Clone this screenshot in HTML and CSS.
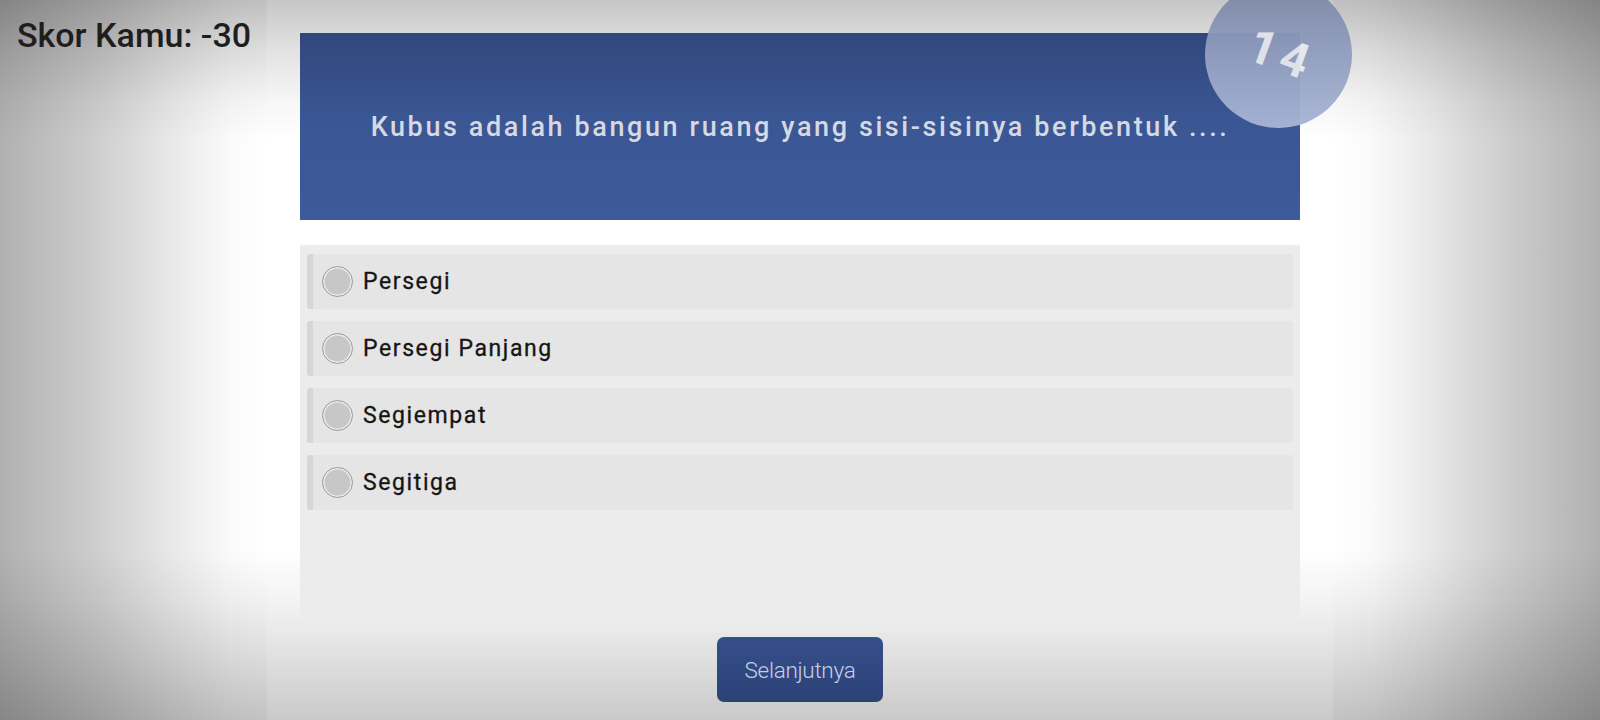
FILE: index.html
```html
<!DOCTYPE html>
<html lang="id">
<head>
<meta charset="utf-8">
<title>Kuis</title>
<link rel="stylesheet" href="styles.css">
</head>
<body>
<div class="page">
  <div class="score">Skor Kamu: -30</div>
  <main class="column">
    <section class="question">
      <p class="question-text">Kubus adalah bangun ruang yang sisi-sisinya berbentuk ....</p>
      <div class="badge"><span class="badge-num">14</span></div>
    </section>
    <section class="answers">
      <label class="option"><span class="radio"></span><span class="option-text">Persegi</span></label>
      <label class="option"><span class="radio"></span><span class="option-text">Persegi Panjang</span></label>
      <label class="option"><span class="radio"></span><span class="option-text">Segiempat</span></label>
      <label class="option"><span class="radio"></span><span class="option-text">Segitiga</span></label>
    </section>
    <div class="actions">
      <button class="next-btn" type="button">Selanjutnya</button>
    </div>
  </main>
</div>
</body>
</html>
```
FILE: styles.css
```css
* { box-sizing: border-box; }
html, body { margin: 0; padding: 0; }
body {
  width: 1600px;
  height: 720px;
  overflow: hidden;
  background: #ffffff;
  font-family: Roboto, "Liberation Sans", sans-serif;
}
.page {
  position: relative;
  width: 1600px;
  height: 720px;
  display: flex;
  justify-content: center;
  overflow: hidden;
  background:
    linear-gradient(to right,
      rgba(0,0,0,0.31) 0px,
      rgba(0,0,0,0.19) 100px,
      rgba(0,0,0,0.09) 170px,
      rgba(0,0,0,0.02) 230px,
      rgba(0,0,0,0) 270px,
      rgba(0,0,0,0) calc(100% - 270px),
      rgba(0,0,0,0.02) calc(100% - 230px),
      rgba(0,0,0,0.09) calc(100% - 170px),
      rgba(0,0,0,0.19) calc(100% - 100px),
      rgba(0,0,0,0.31) 100%),
    linear-gradient(to bottom,
      rgba(0,0,0,0.25) 0px,
      rgba(0,0,0,0.13) 50px,
      rgba(0,0,0,0.04) 100px,
      rgba(0,0,0,0) 140px,
      rgba(0,0,0,0) calc(100% - 170px),
      rgba(0,0,0,0.05) calc(100% - 120px),
      rgba(0,0,0,0.14) calc(100% - 60px),
      rgba(0,0,0,0.24) 100%),
    #ffffff;
}
.score {
  position: absolute;
  left: 17px;
  top: 15px;
  font-size: 34px;
  font-weight: 500;
  color: #1e1e1e;
  z-index: 2;
}
.column {
  width: 1066px;
  height: 720px;
  background: rgba(255, 255, 255, 0.12);
  padding: 33px 33px 0;
  display: flex;
  flex-direction: column;
  align-items: stretch;
}
.question {
  position: relative;
  height: 187px;
  background: linear-gradient(to bottom, #30477b 0%, #3a5693 45%, #3d5a99 100%);
  display: flex;
  align-items: center;
  justify-content: center;
}
.question-text {
  margin: 0;
  font-size: 27px;
  font-weight: 500;
  letter-spacing: 2.6px;
  color: #d6d9e4;
}
.badge {
  position: absolute;
  left: 905px;
  top: -52px;
  width: 147px;
  height: 147px;
  border-radius: 50%;
  background: linear-gradient(to bottom, #7a85a2 0%, #8f9cbd 45%, #a8b5d6 100%);
  opacity: 0.96;
  display: flex;
  align-items: center;
  justify-content: center;
}
.badge-num {
  display: inline-block;
  margin-top: 0px;
  margin-left: 6px;
  font-size: 48px;
  font-weight: 700;
  letter-spacing: 6px;
  color: #e8e9ef;
  transform: rotate(20deg);
}
.answers {
  margin-top: 25px;
  height: 373px;
  background: #ececec;
  border-radius: 2px;
  padding: 9px 7px;
  display: flex;
  flex-direction: column;
  gap: 12px;
}
.option {
  height: 55px;
  background: #e5e5e5;
  border-left: 6px solid #d6d6d6;
  border-radius: 3px;
  display: flex;
  align-items: center;
  padding-left: 9px;
  gap: 10px;
}
.radio {
  width: 31px;
  height: 31px;
  border-radius: 50%;
  background: #c7c7c7;
  border: 1px solid #9e9e9e;
  box-shadow: inset 0 0 0 1.5px #ececec;
  flex: none;
}
.option-text {
  font-size: 23px;
  font-weight: 400;
  letter-spacing: 1.6px;
  color: #151515;
  -webkit-text-stroke: 0.3px #151515;
}
.actions {
  display: flex;
  justify-content: center;
  padding-top: 19px;
}
.next-btn {
  width: 166px;
  height: 65px;
  border: none;
  border-radius: 7px;
  background: linear-gradient(to bottom, #354f8b 0%, #2f4780 60%, #2b4274 100%);
  color: #c9d0e1;
  font-family: Roboto, "Liberation Sans", sans-serif;
  font-size: 22.5px;
  font-weight: 300;
  letter-spacing: -0.3px;
  padding: 0;
}
```
